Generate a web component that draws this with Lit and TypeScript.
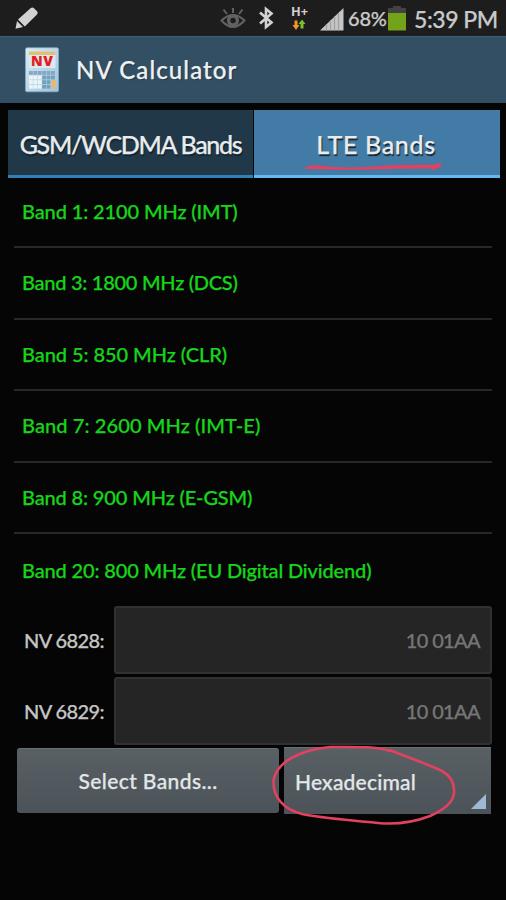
import { LitElement, html, css, svg } from "lit";
import { customElement, property } from "lit/decorators.js";
import { styleMap } from "lit/directives/style-map.js";

@customElement("status-bar")
class StatusBar extends LitElement {
  static styles = css`
    :host { display: flex; align-items: center; height: 36px; background: #1d1d1d; color: #c9c9c9; box-sizing: border-box; padding: 0 8px 0 14px; }
    svg { display: block; flex: none; }
    .pencil { margin-right: auto; }
    .eye { margin-right: 12px; }
    .bt { margin-right: 16px; }
    .net { margin-right: 10px; }
    .signal { margin-right: 4px; }
    .pct { font-size: 20px; width: 40px; letter-spacing: -0.2px; margin-top: -1px; white-space: nowrap; }
    .battery { margin-right: 8px; }
    .time { font-size: 23px; width: 84px; letter-spacing: -0.45px; margin-top: 2px; white-space: nowrap; }
    .mark { font: 700 12px "Open Sans", sans-serif; fill: #d0d0d0; }
  `;
  render() {
    return html`
      <svg class="pencil" width="26" height="36" viewBox="0 0 26 36">
        <path d="M1.500 28.800 3 21 9 27Z M4 19.500 16.500 8.200 Q18.500 7 20 8.200L23.300 11.500Q24.200 13 23 14.500L10.800 26.500Z" fill="#d2d2d2"/>
      </svg>
      <svg class="eye" width="26" height="36" viewBox="0 0 26 36" fill="none" stroke="#626262" stroke-width="2">
        <path d="M1.500 20.500Q13 9.500 24.500 20.500 13 33.500 1.500 20.500Z"/>
        <circle cx="13" cy="20.500" r="4.400" stroke-width="3.400"/>
        <path d="M13 8V13M3.500 9.500l3.500 4.500M22.500 9.500l-3.500 4.500" stroke-width="2"/>
      </svg>
      <svg class="bt" width="16" height="36" viewBox="0 0 16 36" fill="none" stroke="#d2d2d2" stroke-width="2.600">
        <path d="M2 12.500 13.500 22.500 8 27V9L13.500 13.500 2 23.500"/>
      </svg>
      <svg class="net" width="20" height="36" viewBox="0 0 20 36">
        <text class="mark" x="1" y="16" textLength="17" lengthAdjust="spacingAndGlyphs">H+</text>
        <path d="M4.500 20.500h3v4.500H9.500L6 30 2.500 25h2Z" fill="#f0962c"/>
        <path d="M10.500 28.500h3V24H15.500l-3.500-4.500L8.500 24h2Z" fill="#7cbf2a"/>
      </svg>
      <svg class="signal" width="24" height="36" viewBox="0 0 24 36">
        <path d="M0 30.500 23.500 8V30.500Z" fill="#c6c6c6"/>
        <path d="M6.500 24V30.500M10.500 20V30.500M14.500 16.500V30.500M18.500 13V30.500" stroke="#a0a0a0" stroke-width="1.300"/>
      </svg>
      <span class="pct">68%</span>
      <svg class="battery" width="18" height="36" viewBox="0 0 18 36">
        <path d="M5 6h8v2h5v5H0V8h5Z" fill="#424242"/>
        <path d="M0 13h18v17.500H0Z" fill="#73a31a"/>
      </svg>
      <span class="time">5:39 PM</span>
    `;
  }
}

@customElement("title-bar")
class TitleBar extends LitElement {
  static styles = css`
    :host { display: flex; align-items: center; height: 66.500px; background: #334f63; border-top: 1px solid #3c5f78; box-sizing: border-box; padding-left: 25px; color: #eef2f5; }
    svg { display: block; flex: none; margin-right: 16px; }
    .title { font-size: 24px; letter-spacing: 1.1px; white-space: nowrap; text-shadow: 1px 1px 1px #1b2e3d; }
    .nv { font: 800 14px "Open Sans", sans-serif; fill: #e01d24; }
  `;
  render() {
    const keys = [];
    for (let r = 0; r < 4; r++)
      for (let c = 0; c < 6; c++) {
        if (c === 5 && r > 1) continue;
        const fill = r === 0 ? "#82a9c3" : c < 3 ? "#edf4f8" : "#73a0bd";
        keys.push(svg`<rect x=${4 + c * 4.4} y=${24 + r * 4.6} width="3.8" height="3.8" fill=${fill}/>`);
      }
    return html`
      <svg width="35" height="46" viewBox="0 0 35 46">
        <defs><linearGradient id="body" x2="1" y2="1"><stop stop-color="#d9ebf5"/><stop offset="1" stop-color="#9cc4dc"/></linearGradient></defs>
        <rect x=".5" y=".8" width="33" height="44" rx="1.500" fill="url(#body)" stroke="#86adc5" stroke-width=".7"/>
        <path d="M4 4.500H30.500V21H4Z" fill="#dce9ef"/>
        <path d="M4 4.500H30.500V8H4Z" fill="#e3bf72"/>
        <text class="nv" x="6" y="19" textLength="22" lengthAdjust="spacing">NV</text>
        ${keys}
        <rect x="26.500" y="33" width="4" height="8.500" rx="1" fill="#f0b75c"/>
      </svg>
      <span class="title">NV Calculator</span>
    `;
  }
}

@customElement("nv-field")
class NvField extends LitElement {
  @property() label = "";
  @property() value = "";
  static styles = css`
    :host { display: flex; align-items: center; height: 68px; }
    .label { width: 90px; flex: none; color: #c4c4c4; font-size: 20px; letter-spacing: -0.600px; white-space: nowrap; }
    .box { flex: 1; height: 68px; box-sizing: border-box; border: 2px solid #313131; border-radius: 3px; background: #252525; color: #767676; font-size: 20px; display: flex; align-items: center; justify-content: flex-end; padding-right: 10px; letter-spacing: -0.650px; }
  `;
  render() {
    return html`<span class="label">${this.label}</span><div class="box">${this.value}</div>`;
  }
}

@customElement("app-root")
class AppRoot extends LitElement {
  static styles = css`
    :host { display: flex; flex-direction: column; height: 900px; background: #050505; font-family: Lato, "Open Sans", sans-serif; font-weight: 500; -webkit-text-stroke: 0.250px currentColor; overflow: hidden; }
    .tabs { display: grid; grid-template-columns: 245px 246px; gap: 1px; margin: 7.500px 6px 0 8px; height: 68px; }
    .tab { display: flex; align-items: center; justify-content: center; box-sizing: border-box; padding-top: 2px; font-size: 25px; color: #e8ecef; background: #203848; border-bottom: 3px solid #2f80bb; text-shadow: 1px 2px 1px #14222c; white-space: nowrap; letter-spacing: -1.300px; position: relative; }
    .active { background: #427ba6; border-color: #64baf0; letter-spacing: 0.650px; padding-right: 2px; }
    .underline { position: absolute; left: 50px; top: 50px; }
    .list { margin: 0 14px; height: 428px; display: grid; grid-template-rows: 70px repeat(4, 71.600px) 71.600px; }
    .band { display: flex; align-items: center; padding: 0 0 1px 8px; box-sizing: border-box; border-bottom: 2px solid #282828; color: #17d51b; font-size: 20px; white-space: nowrap; }
    .band:first-child { padding-bottom: 3px; }
    .band:last-child { border: 0; }
    .fields { display: flex; flex-direction: column; gap: 3px; margin: 0 14px 0 24px; }
    .actions { position: relative; display: flex; align-items: stretch; gap: 5px; margin: 2px 15px 0 17px; height: 67px; color: #e2e7ea; font-size: 21px; }
    .button { width: 262px; margin: 1px 0; display: flex; align-items: center; justify-content: center; box-sizing: border-box; border-radius: 3px; background: linear-gradient(#596064, #4b5359); border-top: 1px solid #687074; letter-spacing: 0.400px; padding-bottom: 2px; }
    .spinner { flex: 1; box-sizing: border-box; padding-left: 11px; display: flex; align-items: center; background: linear-gradient(#596064, #4b5359); border-top: 1px solid #687074; letter-spacing: 0.200px; }
    .arrow { position: absolute; right: 5px; bottom: 5px; }
    .circle { position: absolute; left: 253px; top: -5px; }
    svg { display: block; }
  `;
  render() {
    const bands: [string, number][] = [
      ["Band 1: 2100 MHz (IMT)", -0.12],
      ["Band 3: 1800 MHz (DCS)", -0.27],
      ["Band 5: 850 MHz (CLR)", -0.06],
      ["Band 7: 2600 MHz (IMT-E)", 0.1],
      ["Band 8: 900 MHz (E-GSM)", -0.14],
      ["Band 20: 800 MHz (EU Digital Dividend)", -0.15],
    ];
    return html`
      <status-bar></status-bar>
      <title-bar></title-bar>
      <div class="tabs">
        <div class="tab">GSM/WCDMA Bands</div>
        <div class="tab active">LTE Bands
          <svg class="underline" width="142" height="14" viewBox="0 0 142 14">
            <path d="M1 8Q5 4.500 15 5.500C40 8 55 8 75 6 95 4.500 115 5 130 4.500L137 3 137 6.500 130 10 127 8.500C105 8.500 85 9 55 9.800 35 10 18 8.500 1 9Z" fill="#e2415f"/>
          </svg>
        </div>
      </div>
      <div class="list">
        ${bands.map(([name, tracking]) => html`<div class="band" style=${styleMap({ letterSpacing: `${tracking}px` })}>${name}</div>`)}
      </div>
      <div class="fields">
        <nv-field label="NV 6828:" value="10 01AA"></nv-field>
        <nv-field label="NV 6829:" value="10 01AA"></nv-field>
      </div>
      <div class="actions">
        <div class="button">Select Bands...</div>
        <div class="spinner">Hexadecimal</div>
        <svg class="arrow" width="15" height="15" viewBox="0 0 15 15"><path d="M15 0V15H0Z" fill="#9db9d3"/></svg>
        <svg class="circle" width="190" height="84" viewBox="270 742 190 84" fill="none" stroke="#e2415f" stroke-width="2.600" stroke-linecap="round" stroke-linejoin="round">
          <path d="M390 751C375 746 350 747 330 747 300 750 276 762 273.500 781 273 797 283 809 302 814 320 818 350 820 378 823 400 825 417 821 430 816 448 808 455 799 454 790 454 782 449 775 442 771 425 763 407 757 390 750"/>
        </svg>
      </div>
    `;
  }
}
